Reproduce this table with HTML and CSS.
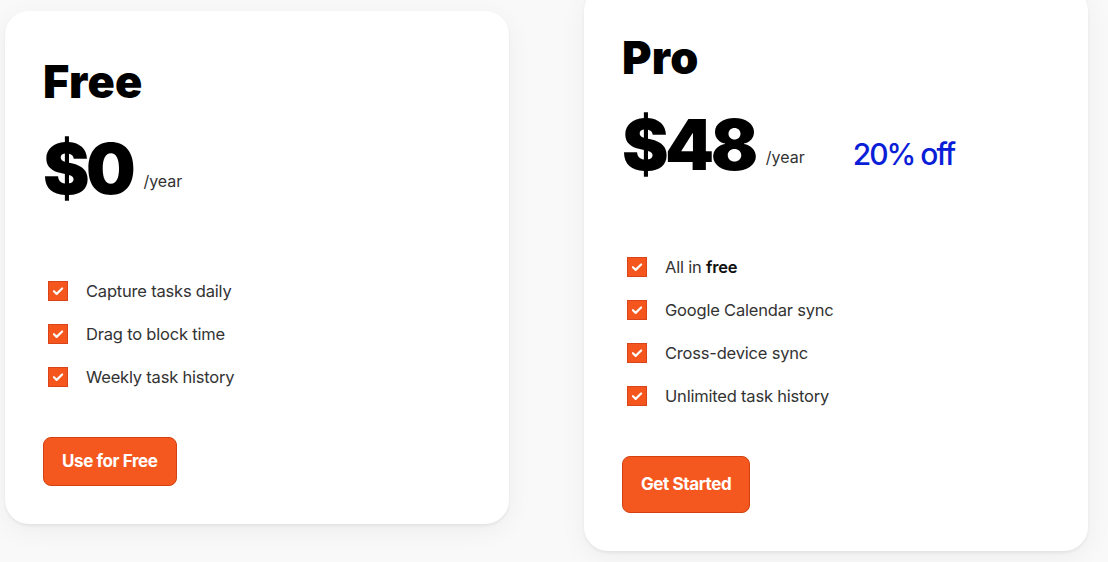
FILE: index.html
```html
<!DOCTYPE html>
<html lang="en">
<head>
<meta charset="utf-8">
<title>Pricing</title>
<link rel="stylesheet" href="styles.css">
</head>
<body>
<main class="plans">
  <section class="card card-free">
    <h2 class="plan-name">Free</h2>
    <div class="price-row">
      <span class="price">$0</span>
      <span class="per">/year</span>
    </div>
    <ul class="features">
      <li><span class="check"><svg viewBox="0 0 20 20" width="20" height="20"><path d="M5.5 10.3l3 2.9L14.6 7.2" fill="none" stroke="#fff" stroke-width="2.4" stroke-linecap="round" stroke-linejoin="round"/></svg></span>Capture tasks daily</li>
      <li><span class="check"><svg viewBox="0 0 20 20" width="20" height="20"><path d="M5.5 10.3l3 2.9L14.6 7.2" fill="none" stroke="#fff" stroke-width="2.4" stroke-linecap="round" stroke-linejoin="round"/></svg></span>Drag to block time</li>
      <li><span class="check"><svg viewBox="0 0 20 20" width="20" height="20"><path d="M5.5 10.3l3 2.9L14.6 7.2" fill="none" stroke="#fff" stroke-width="2.4" stroke-linecap="round" stroke-linejoin="round"/></svg></span>Weekly task history</li>
    </ul>
    <a class="btn btn-free" href="#">Use for Free</a>
  </section>
  <section class="card card-pro">
    <h2 class="plan-name">Pro</h2>
    <div class="price-row">
      <span class="price">$48</span>
      <span class="per">/year</span>
      <span class="off">20% off</span>
    </div>
    <ul class="features">
      <li><span class="check"><svg viewBox="0 0 20 20" width="20" height="20"><path d="M5.5 10.3l3 2.9L14.6 7.2" fill="none" stroke="#fff" stroke-width="2.4" stroke-linecap="round" stroke-linejoin="round"/></svg></span>All in&nbsp;<strong>free</strong></li>
      <li><span class="check"><svg viewBox="0 0 20 20" width="20" height="20"><path d="M5.5 10.3l3 2.9L14.6 7.2" fill="none" stroke="#fff" stroke-width="2.4" stroke-linecap="round" stroke-linejoin="round"/></svg></span>Google Calendar sync</li>
      <li><span class="check"><svg viewBox="0 0 20 20" width="20" height="20"><path d="M5.5 10.3l3 2.9L14.6 7.2" fill="none" stroke="#fff" stroke-width="2.4" stroke-linecap="round" stroke-linejoin="round"/></svg></span>Cross-device sync</li>
      <li><span class="check"><svg viewBox="0 0 20 20" width="20" height="20"><path d="M5.5 10.3l3 2.9L14.6 7.2" fill="none" stroke="#fff" stroke-width="2.4" stroke-linecap="round" stroke-linejoin="round"/></svg></span>Unlimited task history</li>
    </ul>
    <a class="btn btn-pro" href="#">Get Started</a>
  </section>
</main>
</body>
</html>
```
FILE: styles.css
```css
* { box-sizing: border-box; }
html, body { margin: 0; padding: 0; }
body {
  background: #f9f9f9;
  font-family: Inter, "Noto Sans", sans-serif;
  color: #333;
  width: 1108px;
  height: 562px;
  overflow: hidden;
}
.plans {
  display: flex;
  align-items: flex-start;
  gap: 75px;
  padding: 11px 0 0 5px;
}
.card {
  width: 504px;
  background: #fff;
  border-radius: 24px;
  padding: 48px 38px 38px;
  display: flex;
  flex-direction: column;
  align-items: flex-start;
  box-shadow: 0 2px 3px rgba(0,0,0,0.06), 0 6px 28px rgba(0,0,0,0.05);
}
.card-pro { margin-top: -24px; }
.plan-name {
  margin: 0;
  font-size: 45px;
  line-height: 1;
  font-weight: 900;
  letter-spacing: 0.3px;
  color: #000;
}
.price-row {
  margin-top: 30px;
  display: flex;
  align-items: flex-end;
}
.price {
  font-size: 70px;
  line-height: 1;
  font-weight: 900;
  letter-spacing: -3.5px;
  color: #000;
}
.per {
  font-size: 16px;
  line-height: 1;
  margin-left: 11px;
  margin-bottom: 15px;
  color: #333;
}
.off {
  font-size: 30px;
  line-height: 1;
  font-weight: 500;
  letter-spacing: -2px;
  color: #0a1ed8;
  margin-left: 48px;
  margin-bottom: 11px;
}
.features {
  list-style: none;
  margin: 77px 0 0;
  padding: 0 0 0 5px;
  display: flex;
  flex-direction: column;
  gap: 23px;
}
.features li {
  display: flex;
  align-items: center;
  height: 20px;
  font-size: 16.5px;
  letter-spacing: -0.2px;
  color: #333;
}
.features strong { font-weight: 600; color: #111; }
.check {
  width: 20px;
  height: 20px;
  flex: none;
  background: #f4561d;
  border: 1px solid #d9441a;
  margin-right: 18px;
  display: flex;
  align-items: center;
  justify-content: center;
}
.check svg { display: block; width: 18px; height: 18px; }
.btn {
  margin-top: 50px;
  display: inline-block;
  background: #f5581f;
  border: 1px solid #d2410f;
  border-radius: 8px;
  color: #fff;
  font-size: 17px;
  line-height: 21px;
  font-weight: 700;
  letter-spacing: -0.4px;
  text-decoration: none;
}
.btn-free { padding: 13px 18px; }
.btn-pro { padding: 17px 18px; }
```
